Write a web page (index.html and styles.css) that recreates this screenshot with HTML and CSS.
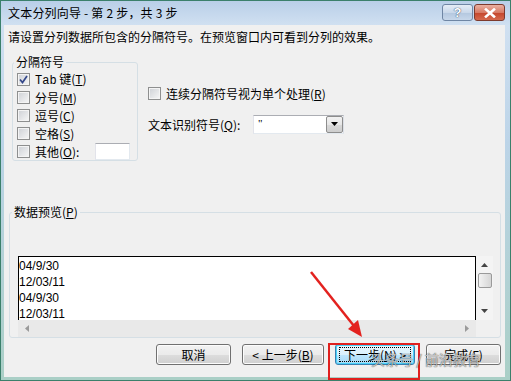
FILE: index.html
```html
<!DOCTYPE html>
<html lang="zh-CN">
<head>
    <meta charset="UTF-8">
    <meta name="viewport" content="width=device-width, initial-scale=1.0">
    <title>文本分列向导</title>
    <link rel="stylesheet" href="styles.css">
</head>
<body>
    <div class="window">
        <div class="titlebar">
            <span class="title">文本分列向导 - 第 2 步，共 3 步</span>
            <div class="tb-buttons">
                <span class="tb-btn help">?</span>
                <span class="tb-btn close">
                    <svg width="14" height="10" viewBox="0 0 14 10"><path d="M3 1.5 L11 8.5 M11 1.5 L3 8.5" stroke="#fff" stroke-width="2.6" stroke-linecap="square"/></svg>
                </span>
            </div>
        </div>

        <div class="client">
            <p class="intro">请设置分列数据所包含的分隔符号。在预览窗口内可看到分列的效果。</p>

            <div class="options">
                <fieldset class="group delims">
                    <legend>分隔符号</legend>
                    <div class="rows">
                        <div class="checkrow">
                            <span class="cb checked"><svg width="11" height="11" viewBox="0 0 11 11"><path d="M2 5.5 L4.5 8.5 L9 2" fill="none" stroke="#34488a" stroke-width="1.7"/></svg></span>
                            <span><span class="latin">Tab</span> 键(<u>T</u>)</span>
                        </div>
                        <div class="checkrow"><span class="cb"></span><span>分号(<u>M</u>)</span></div>
                        <div class="checkrow"><span class="cb"></span><span>逗号(<u>C</u>)</span></div>
                        <div class="checkrow"><span class="cb"></span><span>空格(<u>S</u>)</span></div>
                        <div class="checkrow">
                            <span class="cb"></span><span>其他(<u>O</u>):</span>
                            <span class="other-input"></span>
                        </div>
                    </div>
                </fieldset>

                <div class="right-opts">
                    <div class="checkrow"><span class="cb"></span><span>连续分隔符号视为单个处理(<u>R</u>)</span></div>
                    <div class="qualifier">
                        <span class="q-label">文本识别符号(<u>Q</u>):</span>
                        <div class="combo">
                            <span class="combo-text">"</span>
                            <span class="combo-btn"><svg width="7" height="4" viewBox="0 0 7 4"><path d="M0 0 H7 L3.5 4 Z" fill="#000"/></svg></span>
                        </div>
                    </div>
                </div>
            </div>

            <fieldset class="group preview-group">
                <legend>数据预览(<u>P</u>)</legend>
                <div class="preview">
                    <div class="lines">
                        <div>04/9/30</div>
                        <div>12/03/11</div>
                        <div>04/9/30</div>
                        <div>12/03/11</div>
                    </div>
                    <div class="vscroll">
                        <svg width="7" height="4" viewBox="0 0 7 4"><path d="M3.5 0 L7 4 H0 Z" fill="#444"/></svg>
                        <span class="thumb"></span>
                        <svg class="down" width="7" height="4" viewBox="0 0 7 4"><path d="M0 0 H7 L3.5 4 Z" fill="#444"/></svg>
                    </div>
                    <div class="hscroll">
                        <svg width="4" height="7" viewBox="0 0 4 7"><path d="M4 0 V7 L0 3.5 Z" fill="#9a9a9a"/></svg>
                        <svg width="4" height="7" viewBox="0 0 4 7"><path d="M0 0 V7 L4 3.5 Z" fill="#9a9a9a"/></svg>
                    </div>
                    <div class="corner"></div>
                </div>
            </fieldset>

            <div class="buttons">
                <button class="btn w75">取消</button>
                <button class="btn w82">&lt; 上一步(<u>B</u>)</button>
                <button class="btn w80 default"><span class="focus">下一步(<u>N</u>) &gt;</span></button>
                <button class="btn w75">完成(<u>F</u>)</button>
            </div>
        </div>

        <!-- annotation drawn over the screenshot -->
        <svg class="arrow" width="511" height="381" viewBox="0 0 511 381">
            <line x1="311" y1="272" x2="354" y2="326" stroke="#e3221f" stroke-width="2.5"/>
            <polygon points="362,337 348,329 358,320" fill="#e3221f"/>
        </svg>
        <div class="highlight"></div>
        <div class="watermark">头条号 / 前沿教育</div>
    </div>
</body>
</html>
```

FILE: styles.css
```css
* {
    box-sizing: border-box;
}

body {
    margin: 0;
    font-family: "Noto Sans CJK SC", "Liberation Sans", sans-serif;
    font-size: 12px;
    color: #000;
    background: #fff;
}

.window {
    position: relative;
    width: 511px;
    height: 381px;
    border: 1px solid #3b806b;
    background: linear-gradient(#b9cfe8, #d0e0f1 24px, #bcd4e8 140px, #aacfc6);
    padding: 0 5px 3px 3px;
    display: flex;
    flex-direction: column;
    overflow: hidden;
}

.titlebar {
    height: 24px;
    display: flex;
    align-items: center;
    justify-content: space-between;
    padding-left: 4px;
}

.title {
    line-height: 16px;
    letter-spacing: 0.2px;
}

.tb-buttons {
    display: flex;
    gap: 1px;
    align-self: flex-start;
    margin-top: 3px;
}

.tb-btn {
    width: 31px;
    height: 17px;
    border: 1px solid #6f86a4;
    border-radius: 3px;
    display: flex;
    align-items: center;
    justify-content: center;
}

.help {
    background: linear-gradient(#e5edf6, #c9d8ea 50%, #b3c7df 51%, #c7d7ea);
    color: #fff;
    font-family: "Liberation Sans", sans-serif;
    font-weight: bold;
    font-size: 13px;
    text-shadow: 0 0 1px #3a4f6e, 0 0 1px #3a4f6e;
}

.close {
    border-color: #7d3a2d;
    background: linear-gradient(#eab1a2, #d77a64 50%, #c4452b 51%, #d5694d);
}

.client {
    flex: 1;
    background: #f0f0f0;
}

.intro {
    margin: 0;
    padding: 4px 0 0 4px;
    line-height: 16px;
}

.options {
    display: flex;
    margin-top: 10px;
    padding-left: 8px;
}

.group {
    margin: 0;
    padding: 0;
    border: 1px solid #d5dfe5;
    border-radius: 3px;
    min-width: 0;
}

.group legend {
    padding: 0 2px;
    line-height: 14px;
    margin-left: 1px;
}

.delims {
    width: 126px;
}

.rows {
    padding: 1px 0 0;
}

.checkrow {
    display: flex;
    align-items: center;
    height: 18px;
    padding-left: 4px;
    white-space: nowrap;
}

.checkrow u,
.btn u,
legend u,
.q-label u {
    text-underline-offset: 1px;
}

.latin {
    font-family: "Liberation Mono", monospace;
    font-size: 12px;
}

.cb {
    width: 13px;
    height: 13px;
    margin-right: 5px;
    border: 1px solid #8e8f8f;
    background: linear-gradient(135deg, #cdd0d5, #f7f7f7);
    box-shadow: inset 0 0 0 1px #f4f4f4;
    display: flex;
    align-items: center;
    justify-content: center;
    flex: none;
}

.other-input {
    width: 35px;
    height: 17px;
    margin-left: auto;
    margin-right: 7px;
    background: #fff;
    border: 1px solid #abadb3;
    border-color: #abadb3 #e3e9ef #e3e9ef #e2e3ea;
}

.right-opts {
    margin-left: 10px;
    padding-top: 29px;
}

.right-opts .checkrow {
    padding-left: 0;
}

.qualifier {
    display: flex;
    align-items: center;
    height: 20px;
    margin-top: 12px;
}

.q-label {
    width: 105px;
}

.combo {
    width: 91px;
    height: 19px;
    display: flex;
    background: #fff;
    border: 1px solid #abadb3;
    border-color: #abadb3 #dbdfe6 #e3e9ef #e2e3ea;
}

.combo-text {
    flex: 1;
    padding-left: 4px;
    line-height: 14px;
    font-family: "Liberation Serif", serif;
    font-size: 11px;
    color: #000;
}

.combo-btn {
    width: 17px;
    margin: 0;
    border: 1px solid #8d8d8d;
    border-radius: 2px;
    background: linear-gradient(#f2f2f2, #e6e6e6 50%, #d8d8d8 51%, #cdcdcd);
    display: flex;
    align-items: center;
    justify-content: center;
}

.preview-group {
    width: 492px;
    margin: 44px 0 0 5px;
}

.preview-group legend {
    margin-left: 2px;
}

.preview {
    margin: 37px 0 0 8px;
    width: 475px;
    display: grid;
    grid-template-columns: 458px 17px;
    grid-template-rows: 64px 17px;
}

.lines {
    background: #fff;
    border: 1px solid #000;
    border-bottom: none;
    padding-top: 1px;
    font-family: "Liberation Sans", sans-serif;
    font-size: 12px;
    line-height: 16px;
    overflow: hidden;
}

.vscroll {
    background: #f4f4f4;
    display: flex;
    flex-direction: column;
    align-items: center;
    padding-top: 7px;
}

.thumb {
    width: 14px;
    height: 15px;
    margin-top: 6px;
    border: 1px solid #9a9a9a;
    border-radius: 2px;
    background: linear-gradient(90deg, #f3f3f3, #e4e4e4 50%, #d6d6d6);
}

.vscroll .down {
    margin-top: auto;
    margin-bottom: 7px;
}

.hscroll {
    background: #e9e9e9;
    display: flex;
    align-items: center;
    justify-content: space-between;
    padding: 0 7px;
}

.corner {
    background: #f0f0f0;
}

.buttons {
    display: flex;
    justify-content: flex-end;
    gap: 11px;
    margin-top: 6px;
    padding-right: 4px;
}

.btn {
    height: 21px;
    padding: 0;
    font-family: inherit;
    font-size: 12px;
    color: #000;
    border: 1px solid #707070;
    border-radius: 3px;
    background: linear-gradient(#f2f2f2, #ebebeb 50%, #dddddd 51%, #cfcfcf);
    box-shadow: inset 0 0 0 1px #fcfcfc;
    display: flex;
    align-items: center;
    justify-content: center;
    line-height: 14px;
}

.w75 { width: 75px; }
.w80 { width: 80px; }
.w82 { width: 82px; }

.btn.default {
    border-color: #3c7fb1;
    box-shadow: inset 0 0 0 1px #48d3fa;
    background: linear-gradient(#eaf6fd, #d9f0fc 50%, #bee6fd 51%, #a7d9f5);
}

.focus {
    border: 1px dotted #000;
    padding: 0 4px;
    line-height: 13px;
}

.arrow {
    position: absolute;
    left: -1px;
    top: -1px;
    pointer-events: none;
}

.highlight {
    position: absolute;
    left: 327px;
    top: 342px;
    width: 92px;
    height: 37px;
    border: 2px solid #e0201e;
}

.watermark {
    position: absolute;
    left: 370px;
    top: 349px;
    font-size: 14px;
    line-height: 18px;
    color: rgba(255, 255, 255, 0.7);
    text-shadow: 0 0 1px rgba(0, 0, 0, 0.55), 0 0 1px rgba(0, 0, 0, 0.55);
    white-space: nowrap;
}
```
